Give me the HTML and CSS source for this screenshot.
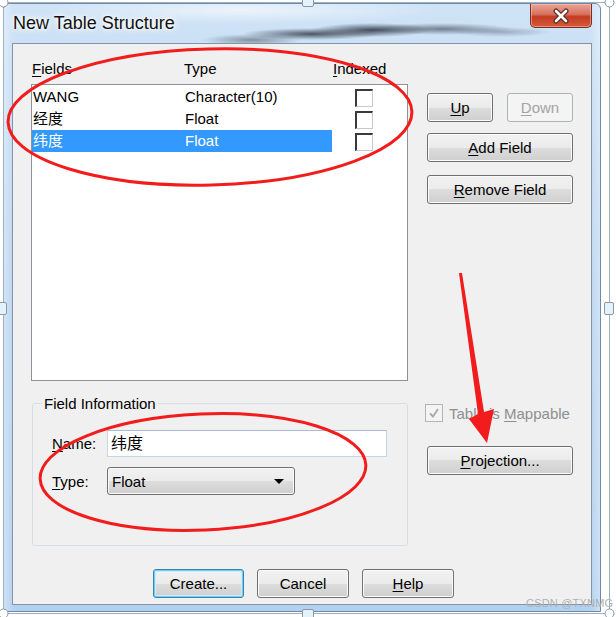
FILE: index.html
```html
<!DOCTYPE html>
<html>
<head>
<meta charset="utf-8">
<link rel="stylesheet" href="styles.css">
</head>
<body>
<div class="window">
  <div class="titlebar">
    <span class="title">New Table Structure</span>
    <div class="close">
      <svg width="20" height="16" viewBox="0 0 20 16"><path d="M5 3 L15 13 M15 3 L5 13" stroke="#5a2a22" stroke-width="5" stroke-linecap="round"/><path d="M5 3 L15 13 M15 3 L5 13" stroke="#ffffff" stroke-width="2.6" stroke-linecap="round"/></svg>
    </div>
  </div>
  <div class="client">
    <div class="main">
      <div class="left">
        <div class="hdr">
          <span><u>F</u>ields</span>
          <span>Type</span>
          <span><u>I</u>ndexed</span>
        </div>
        <div class="list">
          <div class="row">
            <div class="cells"><span>WANG</span><span>Character(10)</span></div>
            <span class="cb"></span>
          </div>
          <div class="row">
            <div class="cells"><span>经度</span><span>Float</span></div>
            <span class="cb"></span>
          </div>
          <div class="row">
            <div class="cells sel"><span>纬度</span><span>Float</span></div>
            <span class="cb"></span>
          </div>
        </div>
        <fieldset class="group">
          <legend>Field Information</legend>
          <div class="form">
            <label><u>N</u>ame:</label>
            <div class="input">纬度</div>
            <label><u>T</u>ype:</label>
            <div class="select"><span>Float</span><span class="arrow"></span></div>
          </div>
        </fieldset>
      </div>
      <div class="right">
        <div class="pair">
          <button class="btn sm"><u>U</u>p</button>
          <button class="btn sm dis"><u>D</u>own</button>
        </div>
        <button class="btn wide add"><u>A</u>dd Field</button>
        <button class="btn wide rem"><u>R</u>emove Field</button>
        <div class="mappable">
          <span class="dcb">
            <svg width="14" height="14" viewBox="0 0 14 14"><path d="M3 7.5 L6 10.5 L11 3" fill="none" stroke="#a9a9a9" stroke-width="1.8"/></svg>
          </span>
          <span>Table is <u>M</u>appable</span>
        </div>
        <button class="btn wide proj"><u>P</u>rojection...</button>
      </div>
    </div>
    <div class="bottom">
      <button class="btn b1 def">Create...</button>
      <button class="btn b2">Cancel</button>
      <button class="btn b2"><u>H</u>elp</button>
    </div>
  </div>
</div>
<div class="watermark">CSDN @TXNMG</div>
<svg class="annot" width="616" height="617" viewBox="0 0 616 617">
  <g fill="none" stroke="#9fb0c4" stroke-width="1">
    <rect x="3.5" y="2.5" width="606" height="611"/>
  </g>
  <g fill="#ffffff" stroke="#8a98a8" stroke-width="1">
    <circle cx="3.5" cy="2.5" r="4.5"/>
    <circle cx="609.5" cy="2.5" r="4.5"/>
    <circle cx="3.5" cy="613.5" r="4.5"/>
    <circle cx="609.5" cy="613.5" r="4.5"/>
  </g>
  <g fill="#e4f2fc" stroke="#8a98a8" stroke-width="1">
    <rect x="302.5" y="-1.5" width="11" height="8" rx="1.5"/>
    <rect x="302.5" y="609.5" width="11" height="9" rx="1.5"/>
    <rect x="604.5" y="302.5" width="9" height="12" rx="1.5"/>
    <rect x="-1.5" y="302.5" width="8" height="12" rx="1.5"/>
  </g>
  <g fill="none" stroke="#f21c1c" stroke-width="3">
    <ellipse cx="210" cy="117" rx="202" ry="68" transform="rotate(-1.5 210 117)"/>
    <ellipse cx="203" cy="472" rx="163" ry="58" transform="rotate(-2.5 203 472)"/>
  </g>
  <polygon fill="#f21c1c" points="459,273 462,273 484,412 494,409 487,443 469,419 478,414"/>
</svg>
</body>
</html>
```
FILE: styles.css
```css
html, body {
  margin: 0;
  padding: 0;
}
body {
  width: 616px;
  height: 617px;
  overflow: hidden;
  position: relative;
  background: #ffffff;
  font-family: "Liberation Sans", "Noto Sans CJK SC", sans-serif;
  font-size: 15px;
  color: #000;
}
u { text-decoration: underline; text-underline-offset: 2px; }

.window {
  box-sizing: border-box;
  margin: 3px 0 0 3px;
  width: 598px;
  height: 609px;
  border: 1px solid #6f8aa8;
  border-radius: 6px 6px 0 0;
  padding: 0 8px 6px 8px;
  background:
    linear-gradient(90deg, rgba(255,255,255,0.35), rgba(255,255,255,0) 10px, rgba(255,255,255,0) calc(100% - 10px), rgba(255,255,255,0.35)),
    linear-gradient(180deg, #cfe3f6 0%, #bcd6f0 40%, #b3d1ef 100%);
}

.titlebar {
  height: 39px;
  display: flex;
  align-items: flex-start;
  background:
    radial-gradient(ellipse 50px 6px at 240px 36px, rgba(40,48,62,0.45), rgba(40,48,62,0)),
    radial-gradient(ellipse 70px 6px at 300px 30px, rgba(30,38,52,0.75), rgba(30,38,52,0)),
    radial-gradient(ellipse 60px 7px at 360px 26px, rgba(30,38,52,0.8), rgba(30,38,52,0)),
    radial-gradient(ellipse 70px 6px at 430px 25px, rgba(40,48,62,0.55), rgba(40,48,62,0)),
    radial-gradient(ellipse 50px 5px at 490px 28px, rgba(60,70,90,0.35), rgba(60,70,90,0)),
    radial-gradient(ellipse 200px 14px at 230px 6px, rgba(255,255,255,0.6), rgba(255,255,255,0));
}
.title {
  margin: 8px 0 0 1px;
  font-size: 18px;
  line-height: 22px;
  color: #111;
  text-shadow: 0 0 6px #fff, 0 0 10px #fff, 0 0 3px #fff;
}
.close {
  margin-left: auto;
  margin-right: 0;
  width: 62px;
  height: 24px;
  box-sizing: border-box;
  border: 1px solid #7b2d22;
  border-top: none;
  border-radius: 0 0 5px 5px;
  background: linear-gradient(180deg, #e8a598 0%, #d7705c 45%, #c43b22 55%, #d45a3c 100%);
  box-shadow: inset 0 0 0 1px rgba(255,200,190,0.5);
  display: flex;
  align-items: center;
  justify-content: center;
}

.client {
  box-sizing: border-box;
  height: 562px;
  background: #f0f0f0;
  border: 1px solid #8194aa;
}

.main {
  display: flex;
  gap: 19px;
  padding: 16px 17px 0 18px;
}
.left { width: 377px; }
.hdr {
  height: 24px;
  display: grid;
  grid-template-columns: 152px 149px auto;
  padding-left: 1px;
  line-height: 17px;
}
.list {
  box-sizing: border-box;
  height: 297px;
  background: #fff;
  border: 1px solid #8e9196;
  padding-top: 1px;
}
.row {
  display: flex;
  height: 22px;
}
.cells {
  width: 300px;
  display: grid;
  grid-template-columns: 153px 147px;
  line-height: 22px;
}
.cells span:first-child { padding-left: 1px; }
.cells.sel {
  background: #3399ff;
  color: #fff;
}
.cb {
  box-sizing: border-box;
  margin: 3px 0 0 23px;
  width: 18px;
  height: 18px;
  background: #fff;
  border-style: solid;
  border-width: 2px 1px 1px 2px;
  border-color: #3a3a3a #c8c8c8 #c8c8c8 #3a3a3a;
}

.group {
  box-sizing: border-box;
  margin: 14px 0 0 1px;
  width: 376px;
  height: 151px;
  border: 1px solid #d5dfe5;
  border-radius: 3px;
  padding: 0 9px;
  min-width: 0;
}
.group legend {
  padding: 0 2px;
  line-height: 17px;
}
.form {
  margin-top: 18px;
  padding-left: 10px;
  display: grid;
  grid-template-columns: 55px auto;
  grid-template-rows: 27px 28px;
  row-gap: 10px;
  align-items: center;
}
.input {
  box-sizing: border-box;
  width: 280px;
  height: 27px;
  background: #fff;
  border: 1px solid #c5d6e6;
  border-top-color: #a7bdd3;
  padding-left: 3px;
  line-height: 25px;
  font-size: 16px;
}
.select {
  box-sizing: border-box;
  width: 188px;
  height: 28px;
  border: 1px solid #707070;
  border-radius: 3px;
  background: linear-gradient(180deg, #f2f2f2 0%, #ebebeb 50%, #dddddd 50%, #cfcfcf 100%);
  box-shadow: inset 0 0 0 1px #fbfbfb;
  display: flex;
  align-items: center;
  padding: 0 10px 0 4px;
}
.select .arrow {
  margin-left: auto;
  width: 0;
  height: 0;
  border-left: 5px solid transparent;
  border-right: 5px solid transparent;
  border-top: 5px solid #000;
}

.right {
  width: 146px;
  padding-top: 33px;
  display: flex;
  flex-direction: column;
}
.pair { display: flex; gap: 14px; }
.btn {
  box-sizing: border-box;
  height: 29px;
  padding: 0;
  border: 1px solid #707070;
  border-radius: 3px;
  background: linear-gradient(180deg, #f2f2f2 0%, #ebebeb 50%, #dddddd 50%, #cfcfcf 100%);
  box-shadow: inset 0 0 0 1px #fbfbfb;
  font-family: "Liberation Sans", sans-serif;
  font-size: 15px;
  color: #000;
  text-align: center;
}
.btn.sm { width: 66px; }
.btn.wide { width: 146px; }
.btn.dis {
  border-color: #adb2b5;
  background: #f4f4f4;
  color: #a3a3a3;
  box-shadow: none;
}
.add { margin-top: 11px; }
.rem { margin-top: 13px; }
.mappable {
  margin: 200px 0 0 -2px;
  height: 18px;
  display: flex;
  align-items: center;
  gap: 6px;
  color: #8f8f8f;
}
.dcb {
  box-sizing: border-box;
  width: 18px;
  height: 18px;
  border: 1px solid #b4b4b4;
  background: #f4f4f4;
  display: flex;
  align-items: center;
  justify-content: center;
}
.proj { margin-top: 24px; }

.bottom {
  display: flex;
  gap: 13px;
  margin-top: 23px;
  padding-left: 140px;
}
.btn.b1 { width: 91px; }
.btn.b2 { width: 92px; }
.btn.def {
  border-color: #3c7fb1;
  box-shadow: inset 0 0 0 1px #6fd0f7, inset 0 0 0 2px #c8eefc;
}

.watermark {
  position: absolute;
  left: 526px;
  top: 597px;
  font-family: "Liberation Sans", sans-serif;
  font-size: 11px;
  color: #b0b0b0;
  letter-spacing: 0.2px;
}
.annot {
  position: absolute;
  left: 0;
  top: 0;
  pointer-events: none;
}
```
